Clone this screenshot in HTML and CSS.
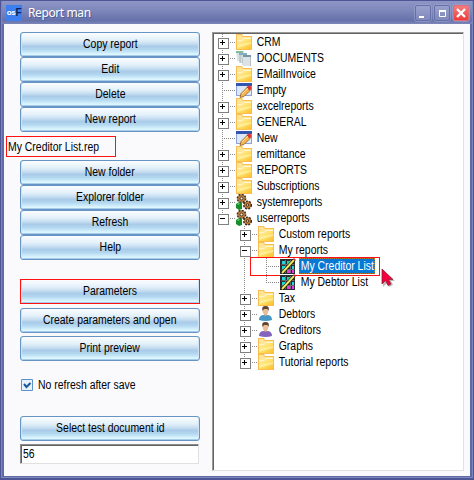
FILE: index.html
```html
<!DOCTYPE html>
<html lang="en">
<head>
<meta charset="utf-8">
<title>Report man</title>
<link rel="stylesheet" href="styles.css">
</head>
<body>
<svg class="defs" width="0" height="0" aria-hidden="true">
  <defs>
    <linearGradient id="gold" x2="1" y2="1"><stop offset="0" stop-color="#fff0b0"/><stop offset=".5" stop-color="#ffe067"/><stop offset="1" stop-color="#fbc02f"/></linearGradient>
    <symbol id="folder" viewBox="0 0 16 16"><path d="M0 0h6l1 2h9v14H0z" fill="#fbbd50"/><path d="M1 1h4l2 2h8v12H1z" fill="#ffe596"/><path d="M1 7h5l2-2h7v10H1z" fill="url(#gold)"/><path d="M1 6.500h5l2-2h7" fill="none" stroke="#fff5cf"/><path d="M1 11l14-3v2L1 14z" fill="#fff6b8" opacity=".6"/></symbol>
    <symbol id="docs" viewBox="0 0 16 16"><path d="M0 1h8v10H1z" fill="#d9e2e5"/><path d="M0 1h7v2H0z" fill="#83bd9d"/><path d="M4 3h7v10H4z" fill="#d3dde1"/><path d="M3 3h8v2H3z" fill="#83adc0"/><path d="M4 5v8M7 7v8" stroke="#a9b6bc"/><path d="M7 5h8v11H7z" fill="#dbe3e6"/><path d="M7 5h8v2H7z" fill="#7895a4"/><path d="M14.500 7v9" stroke="#b4c0c5"/></symbol>
    <symbol id="edit" viewBox="0 0 16 16"><path d="M0 1h16v13H0z" fill="#8ba3d6"/><path d="M0 1h16v3H0z" fill="#3154ad"/><path d="M1 4h14v9H1z" fill="#dce8fa"/><path d="M4 15.500l1-4 7-7 3 3-7 7z" fill="#f6b64a" stroke="#985823" stroke-width=".8"/><path d="M10.500 5.500l2-2q3 0 3 3l-2 2z" fill="#d93539"/><path d="M6 12l6-6" stroke="#ffe49b"/></symbol>
    <symbol id="gears" viewBox="0 0 16 16"><circle cx="5.500" cy="4.500" r="4" fill="#a8692f" stroke="#3d2c1a" stroke-width="1.800" stroke-dasharray="1.800 1.300"/><circle cx="5.500" cy="4.500" r="3.300" fill="#b57d43"/><circle cx="5.500" cy="4.500" r="1.400" fill="#fff3dc" stroke="#54361b"/><circle cx="11.500" cy="11" r="3.700" fill="#a8692f" stroke="#3d2c1a" stroke-width="1.800" stroke-dasharray="1.800 1.300"/><circle cx="11.500" cy="11" r="3" fill="#b97b3e"/><circle cx="11.500" cy="11" r="1.200" fill="#f7d7ac" stroke="#54361b"/><path d="M0 10l3-2 3 1v6l-3 1-3-2z" fill="#168c2d"/><path d="M1 10l2-1 1 1-2 1z" fill="#61d267"/></symbol>
    <symbol id="report" viewBox="0 0 16 16"><path d="M0 1h15v15H0z" fill="#2b2b30"/><path d="M1.500 6.500h13M1.500 11.500h13M5.500 2v13M10.500 2v13" stroke="#6b6b70"/><path d="M2 3h3v3H2zM2 8h3v3H2zM12 8h2v3h-2z" fill="#24d6dc"/><path d="M7 3h3v3H7zM2 12h2v2H2z" fill="#2fc99a"/><path d="M7 12h3v3H7zM12 12h2v3h-2z" fill="#f034e8"/><path d="M2 15L14 2" stroke="#18180d" stroke-width="3.200"/><path d="M2 15L14 2" stroke="#eee95a" stroke-width="1.900"/><path d="M13 1l1-1 2 2-1 1z" fill="#bc2945"/></symbol>
    <symbol id="bust" viewBox="0 0 16 16"><path d="M1 14q0-5 5-5h3q5 0 5 5-6 2-13 0z" fill="currentColor"/><path d="M6 7h3v2l-1.500 1L6 9z" fill="#e2ae82"/><ellipse cx="7.500" cy="5" rx="2.800" ry="3.500" fill="#e9bd95"/><path d="M4.500 5Q3 0 7.500 0T10.500 5l-1-2H6z" fill="#614334"/></symbol>
  </defs>
</svg>
<main class="window">
  <header class="titlebar">
    <span class="logo"><span>os</span><b>F</b></span>
    <h1>Report man</h1>
    <div class="controls">
      <button class="ctl" aria-label="Minimize"><svg width="14" height="14"><path d="M3 10h5v2H3z" fill="#fff"/></svg></button>
      <button class="ctl" aria-label="Maximize"><svg width="14" height="14"><path d="M4.500 4.500h6v6h-6z" fill="none" stroke="#fff"/><path d="M4 4h7v2H4z" fill="#fff"/></svg></button>
      <button class="ctl close" aria-label="Close"><svg width="14" height="14"><path d="M3 3l8 8M11 3l-8 8" stroke="#fff" stroke-width="2.400"/></svg></button>
    </div>
  </header>
  <div class="client">
    <section class="panel">
      <div class="group">
        <button class="btn"><span>Copy report</span></button>
        <button class="btn"><span>Edit</span></button>
        <button class="btn"><span>Delete</span></button>
        <button class="btn"><span>New report</span></button>
      </div>
      <div class="filename"><span>My Creditor List.rep</span></div>
      <div class="group">
        <button class="btn"><span>New folder</span></button>
        <button class="btn"><span>Explorer folder</span></button>
        <button class="btn"><span>Refresh</span></button>
        <button class="btn"><span>Help</span></button>
      </div>
      <div class="group actions">
        <button class="btn marked"><span>Parameters</span></button>
        <button class="btn"><span>Create parameters and open</span></button>
        <button class="btn"><span>Print preview</span></button>
      </div>
      <div class="check"><svg width="12" height="12"><path d="M.5.500h11v11H.5z" fill="#e6f2fc" stroke="#5d92c7"/><path d="M3 5l2.500 3L9.500 4" fill="none" stroke="#1e5799" stroke-width="2"/></svg><span>No refresh after save</span></div>
      <button class="btn"><span>Select test document id</span></button>
      <div class="input"><span>56</span></div>
    </section>
    <section class="tree">
      <div class="row"><i class="cell v h plus"></i><svg><use href="#folder"/></svg><span>CRM</span></div>
      <div class="row"><i class="cell v h plus"></i><svg><use href="#docs"/></svg><span>DOCUMENTS</span></div>
      <div class="row"><i class="cell v h plus"></i><svg><use href="#folder"/></svg><span>EMailInvoice</span></div>
      <div class="row"><i class="cell v h"></i><svg><use href="#edit"/></svg><span>Empty</span></div>
      <div class="row"><i class="cell v h plus"></i><svg><use href="#folder"/></svg><span>excelreports</span></div>
      <div class="row"><i class="cell v h plus"></i><svg><use href="#folder"/></svg><span>GENERAL</span></div>
      <div class="row"><i class="cell v h"></i><svg><use href="#edit"/></svg><span>New</span></div>
      <div class="row"><i class="cell v h plus"></i><svg><use href="#folder"/></svg><span>remittance</span></div>
      <div class="row"><i class="cell v h plus"></i><svg><use href="#folder"/></svg><span>REPORTS</span></div>
      <div class="row"><i class="cell v h plus"></i><svg><use href="#folder"/></svg><span>Subscriptions</span></div>
      <div class="row"><i class="cell v h plus"></i><svg><use href="#gears"/></svg><span>systemreports</span></div>
      <div class="row"><i class="cell v last h minus"></i><svg><use href="#gears"/></svg><span>userreports</span></div>
      <div class="row"><i class="cell"></i><i class="cell v h plus"></i><svg><use href="#folder"/></svg><span>Custom reports</span></div>
      <div class="row"><i class="cell"></i><i class="cell v h minus"></i><svg><use href="#folder"/></svg><span>My reports</span></div>
      <div class="row current"><i class="cell"></i><i class="cell v"></i><i class="cell v h"></i><svg><use href="#report"/></svg><div class="selected"><span>My Creditor List</span></div><i class="highlight"></i><svg class="pointer" viewBox="0 0 14 20"><path d="M2 2v17l4-4 2 4 4-2-2-4h4z" fill="#777" opacity=".5"/><path d="M1 1v15l3.500-3.500L7 17.500l3-1.500-2.500-4.500H12z" fill="#f5003d" stroke="#7c2030" stroke-width=".7"/></svg></div>
      <div class="row"><i class="cell"></i><i class="cell v"></i><i class="cell v last h"></i><svg><use href="#report"/></svg><span>My Debtor List</span></div>
      <div class="row"><i class="cell"></i><i class="cell v h plus"></i><svg><use href="#folder"/></svg><span>Tax</span></div>
      <div class="row"><i class="cell"></i><i class="cell v h plus"></i><svg class="blue"><use href="#bust"/></svg><span>Debtors</span></div>
      <div class="row"><i class="cell"></i><i class="cell v h plus"></i><svg class="purple"><use href="#bust"/></svg><span>Creditors</span></div>
      <div class="row"><i class="cell"></i><i class="cell v h plus"></i><svg><use href="#folder"/></svg><span>Graphs</span></div>
      <div class="row"><i class="cell"></i><i class="cell v last h plus"></i><svg><use href="#folder"/></svg><span>Tutorial reports</span></div>
    </section>
  </div>
</main>
</body>
</html>
```
FILE: styles.css
```css
* { box-sizing: border-box; }
body { margin: 0; font: 12px/14px "Liberation Sans", sans-serif; color: #000; }
button { font: inherit; color: inherit; margin: 0; padding: 0; }
.defs { position: absolute; }
.window { width: 474px; height: 480px; background: #5f6ba6; border: solid #4d5594; border-width: 1px 1px 2px; display: flex; flex-direction: column; padding: 0 3px 2px; box-shadow: inset 1px 0 #7e87ba, inset -1px 0 #7e87ba, inset 0 -1px #7e87ba; }
.titlebar { height: 23px; flex: none; margin: 0 -2px; padding: 0 2px; display: flex; align-items: center; background: linear-gradient(#8d96c6, #7f88bb 40%, #6671aa 85%, #7c86b9); }
.logo { width: 16px; height: 16px; margin: 0 6px 0 2px; background: #3e7ff0; color: #fff; display: flex; align-items: center; justify-content: center; font-size: 8px; font-weight: bold; letter-spacing: -0.4px; }
.logo b { color: #08235c; font-size: 10px; }
h1 { margin: 0; flex: 1; color: #fff; font: 12px/16px "Noto Sans", sans-serif; letter-spacing: -0.4px; text-shadow: 1px 1px #515b98; }
.controls { display: flex; gap: 3px; margin-right: 1px; }
.ctl { width: 16px; height: 16px; border: 1px solid #6570a8; border-radius: 2px; background: linear-gradient(#99a2cc, #7f89bb); box-shadow: 0 0 0 .5px #a3abd0; }
.ctl svg { display: block; }
.close { background: linear-gradient(#f57d7d, #ef3b3b); border-color: #e26a78; }
.client { flex: 1; min-height: 0; background: #fafafd; display: flex; padding: 8px 6px 5px 16px; }
.panel { width: 180px; margin-right: 12px; }
.group { display: flex; flex-direction: column; }
.btn { display: block; width: 180px; height: 25px; border: 1px solid #6594c5; border-radius: 3px; background: linear-gradient(#fbfdff, #e3f0fa 30%, #c3dcf0 48%, #a9cbe8 58%, #b3d7f0 72%, #dbf6ff 92%, #e8fbff); box-shadow: inset 1px 0 #cfe4f5, inset -1px 0 #cfe4f5, inset 0 -1px #a7cbea; padding-bottom: 1px; }
.btn span { display: inline-block; transform: scaleX(.87); }
.filename span, .check span, .input span, .row span { display: inline-block; transform: scaleX(.87); transform-origin: 0 0; white-space: nowrap; }
.filename { margin: 4px 0 3px -14px; width: 110px; height: 21px; border: 1px solid #f11; padding: 3px 1px; white-space: nowrap; }
.actions { margin-top: 19px; gap: 3px; }
.btn.marked { border-color: #f11; border-radius: 0; margin-bottom: 1px; }
.check { margin: 16px 0 23px 1px; height: 16px; display: flex; align-items: center; gap: 5px; }
.input { margin-top: 3px; width: 179px; height: 20px; background: #fff; border: 1px solid; border-color: #8b8b8b #e0e0e0 #e0e0e0 #8b8b8b; box-shadow: inset 1px 1px #626262; padding: 2px; }
.tree { width: 252px; background: #fff; border: 1px solid; border-color: #999 #e2e2e2 #e2e2e2 #999; box-shadow: inset 1px 1px #636363; padding: 1px; }
.row { height: 16px; display: flex; align-items: center; position: relative; white-space: nowrap; }
.row svg { width: 16px; height: 16px; flex: none; margin-right: 3px; }
.row span { padding: 0 2px; height: 14px; }
.cell { width: 22px; height: 16px; flex: none; position: relative; }
.v { background: repeating-linear-gradient(#888 0 1px, transparent 1px 2px) 8px 0 / 1px 16px no-repeat; }
.v.last { background-size: 1px 8px; }
.h::before { content: ""; position: absolute; left: 8px; top: 8px; width: 14px; height: 1px; background: repeating-linear-gradient(90deg, #888 0 1px, transparent 1px 2px); }
.plus::after, .minus::after { content: ""; position: absolute; left: 4px; top: 4px; width: 9px; height: 9px; border: 1px solid #808080; background: linear-gradient(#000, #000) 1px 3px / 5px 1px no-repeat, #fff; }
.plus::after { background: linear-gradient(#000, #000) 1px 3px / 5px 1px no-repeat, linear-gradient(#000, #000) 3px 1px / 1px 5px no-repeat, #fff; }
.selected { width: 76px; height: 16px; padding-top: 1px; color: #fff; background: #0878d5; outline: 1px dotted #b5762c; outline-offset: -1px; }
.highlight { position: absolute; left: 36px; top: -1px; width: 130px; height: 19px; border: 1px solid #f11; }
.row .pointer { position: absolute; left: 167px; top: 10px; width: 14px; height: 20px; margin: 0; }
.blue { color: #4798c4; }
.purple { color: #8465bd; }
```
